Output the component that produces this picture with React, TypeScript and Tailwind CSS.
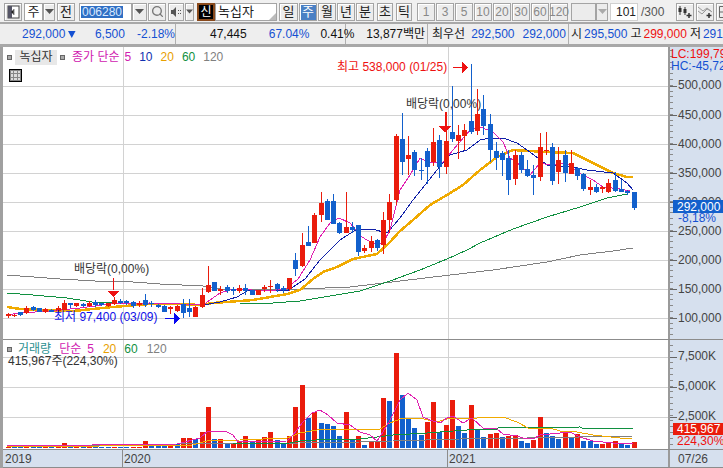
import { Search } from "lucide-react";
import type { ReactNode } from "react";

const RED = "#ea1c0c";
const BLUE = "#1260cc";

// wickTop, bodyTop, bodyBottom, wickBottom, red?  (page pixels)
const candles: [number, number, number, number, number][] = [
  [313, 314, 316, 318, 1], [314, 315, 316, 317, 1], [312, 312, 315, 316, 0], [306, 308, 313, 314, 1], [306, 307, 310, 311, 0],
  [308, 308, 312, 312, 0], [308, 309, 312, 313, 1], [309, 310, 312, 312, 0], [306, 308, 311, 312, 1], [300, 303, 310, 310, 1],
  [303, 303, 305, 308, 0], [303, 303, 306, 307, 1], [303, 304, 306, 307, 0], [301, 303, 306, 307, 1], [300, 302, 305, 307, 0],
  [303, 303, 305, 306, 0], [303, 303, 306, 307, 1], [297, 300, 304, 305, 1], [299, 301, 303, 304, 0], [300, 301, 303, 305, 0],
  [301, 302, 306, 308, 0], [301, 303, 305, 307, 1], [294, 300, 305, 307, 0], [301, 303, 304, 307, 0], [304, 305, 307, 308, 0],
  [305, 306, 312, 312, 0], [306, 307, 309, 314, 1], [305, 306, 311, 312, 1], [299, 304, 313, 318, 0], [299, 308, 312, 317, 0],
  [306, 307, 317, 317, 1], [288, 295, 307, 308, 1], [266, 285, 292, 293, 1], [282, 282, 291, 291, 0], [286, 289, 291, 295, 1],
  [285, 287, 291, 293, 0], [287, 289, 291, 295, 0], [285, 288, 291, 293, 1], [284, 288, 291, 295, 0], [290, 290, 295, 295, 0],
  [290, 290, 295, 295, 1], [285, 287, 289, 292, 1], [280, 286, 287, 293, 1], [283, 284, 289, 292, 0], [286, 288, 290, 293, 0],
  [278, 278, 289, 291, 1], [253, 260, 269, 276, 0], [233, 245, 266, 267, 1], [226, 242, 246, 246, 0], [213, 215, 243, 243, 1],
  [192, 203, 215, 222, 1], [199, 201, 220, 220, 0], [194, 201, 224, 224, 0], [222, 223, 233, 234, 0], [192, 227, 233, 233, 1],
  [222, 227, 230, 233, 0], [225, 225, 252, 256, 0], [245, 248, 251, 253, 1], [236, 241, 248, 252, 1], [239, 240, 248, 251, 0],
  [212, 220, 245, 254, 1], [194, 202, 220, 233, 1], [134, 136, 200, 205, 1], [113, 139, 162, 175, 0], [136, 155, 159, 175, 1],
  [150, 152, 170, 176, 0], [158, 170, 171, 180, 0], [148, 151, 167, 184, 0], [128, 142, 162, 166, 1], [135, 140, 167, 178, 0],
  [112, 141, 167, 174, 1], [86, 132, 139, 142, 0], [125, 135, 141, 159, 1], [124, 130, 136, 150, 1], [64, 121, 132, 134, 0],
  [89, 114, 131, 135, 1], [95, 109, 126, 135, 0], [114, 124, 150, 162, 0], [142, 151, 158, 170, 0], [151, 153, 160, 176, 0],
  [150, 158, 180, 195, 0], [150, 155, 179, 185, 1], [152, 155, 170, 173, 0], [160, 169, 176, 177, 0], [165, 175, 178, 195, 0],
  [133, 147, 177, 181, 1], [132, 150, 151, 155, 1], [143, 147, 181, 185, 0], [147, 160, 172, 184, 1], [150, 155, 173, 182, 0],
  [150, 163, 174, 174, 1], [167, 168, 176, 180, 0], [173, 174, 189, 191, 0], [180, 187, 190, 195, 1], [184, 187, 192, 193, 0],
  [186, 187, 189, 193, 1], [179, 183, 192, 193, 1], [172, 180, 191, 192, 0], [180, 189, 192, 192, 0], [190, 191, 193, 195, 0],
  [192, 192, 208, 210, 0],
];

// volume bar tops (page pixels), red?
const volumes: [number, number][] = [
  [447, 1], [447, 0], [447, 0], [447, 1], [447, 0], [447, 0], [447, 1], [447, 0], [446, 1], [443, 1], [446, 0], [446, 1], [446, 0], [446, 1], [447, 0],
  [447, 0], [447, 0], [447, 1], [447, 0], [447, 0], [447, 1], [447, 1], [441, 1], [445, 0], [445, 0], [446, 0], [446, 1], [444, 0], [438, 1], [438, 1],
  [439, 0], [432, 1], [407, 1], [439, 0], [439, 1], [444, 0], [443, 1], [441, 1], [436, 1], [441, 0], [440, 1], [437, 1], [432, 1], [440, 0], [444, 0],
  [436, 1], [407, 1], [385, 1], [418, 0], [412, 1], [423, 0], [424, 0], [426, 0], [436, 0], [412, 1], [440, 0], [436, 1], [445, 0], [442, 1], [442, 1],
  [398, 1], [401, 0], [353, 1], [395, 0], [418, 0], [428, 0], [435, 0], [422, 1], [402, 1], [432, 0], [425, 1], [400, 1], [426, 0], [433, 0], [405, 1],
  [430, 0], [437, 0], [434, 1], [433, 1], [437, 0], [436, 1], [435, 1], [441, 0], [443, 0], [440, 1], [417, 1], [433, 0], [436, 0], [439, 0], [432, 1],
  [438, 0], [434, 1], [441, 0], [441, 0], [444, 0], [444, 1], [442, 1], [441, 1], [444, 0], [445, 0], [442, 1],
];

const priceLines = [
  { c: "#808080", w: 1, p: "7,275 60,279 113,282 120,281 160,284 203,286 220,289 253,289 300,289 350,287 400,281 450,275 493,270 547,262 580,255 613,251 633,248" },
  { c: "#109040", w: 1, p: "7,293 33,295 67,298 92,302 113,303 180,304 240,304 273,303 300,301 330,296 360,291 390,281 420,270 447,259 467,250 480,243 513,229 547,217 580,207 607,198 627,194" },
  { c: "#f0aa00", w: 2.5, p: "7,307 20,309 47,310 73,311 113,307 150,304 180,304 200,305 213,303 253,300 287,294 300,290 313,279 323,272 337,267 353,259 377,254 390,242 399,232 413,220 430,205 447,195 463,185 480,170 497,157 513,150 547,152 573,153 593,163 613,173 627,177 633,177" },
  { c: "#1020a8", w: 1, p: "203,305 220,302 237,297 247,291 253,290 287,291 305,279 320,260 340,240 357,229 372,229 387,233 400,218 413,200 437,170 450,155 467,150 480,140 490,138 503,138 517,143 530,152 547,165 573,167 587,170 613,173 627,183 633,190" },
  { c: "#e020b0", w: 1, p: "7,315 20,313 50,311 80,308 110,304 150,303 180,304 203,305 220,293 233,289 270,291 287,288 298,279 310,260 320,237 330,223 339,218 350,223 362,237 372,243 383,243 390,230 400,190 410,175 420,158 430,163 443,162 453,150 470,130 480,127 493,132 503,142 510,158 520,165 530,175 540,163 550,165 567,163 577,172 593,180 603,187 620,189 630,191" },
];

const volumeLines = [
  { c: "#808080", w: 1, p: "7,446 140,445 177,444 300,443 360,442 393,441 460,439 527,438 633,436" },
  { c: "#109040", w: 1, p: "233,444 290,443 300,441 333,439 360,439 377,437 393,435 427,433 467,430 497,429 498,428 580,427 582,428 633,428" },
  { c: "#f0aa00", w: 1, p: "7,447 193,445 207,441 240,440 287,438 300,433 317,430 343,429 370,430 380,429 390,423 403,418 420,418 437,422 450,418 477,418 503,417 517,422 530,429 550,428 560,431 577,432 593,435 620,438 632,439" },
  { c: "#e020b0", w: 1, p: "7,446 177,444 200,438 208,431 227,432 233,435 238,442 287,441 293,435 303,422 312,413 320,410 328,415 337,423 350,425 360,432 370,435 377,441 383,432 390,420 400,400 408,393 417,400 423,417 430,420 440,423 447,418 453,416 463,423 472,418 483,428 497,429 503,434 517,436 523,438 533,439 540,435 560,433 570,432 580,437 593,441 613,443 633,443" },
];

const cx = (i: number) => Math.round(7.5 + 6.26 * i);

function Btn({ children, className = "" }: { children?: ReactNode; className?: string }) {
  return (
    <div className={`flex h-[18px] shrink-0 items-center justify-center border border-[#a4a4a4] bg-[#ececec] text-[13px] text-[#222] shadow-[inset_1px_1px_0_#fff] ${className}`}>
      {children}
    </div>
  );
}

function Caret({ color = "#555" }: { color?: string }) {
  return (
    <svg width="9" height="5" viewBox="0 0 9 5">
      <path d="M0 0h9L4.5 5z" fill={color} />
    </svg>
  );
}

function Square() {
  return <div className="h-[5px] w-[5px] shrink-0 border border-[#666] bg-[#aaa]" />;
}

function PriceChart() {
  return (
    <svg width="665" height="292" viewBox="3 47 665 292" shapeRendering="crispEdges" className="block">
      {[86, 115, 144, 173, 202, 231, 260, 289, 318].map((y) => (
        <line key={y} x1="3" x2="668" y1={y} y2={y} stroke="#d2d2d2" />
      ))}
      <line x1="123.5" x2="123.5" y1="47" y2="339" stroke="#d2d2d2" />
      <line x1="448.5" x2="448.5" y1="47" y2="339" stroke="#d2d2d2" />
      {priceLines.map((l) => (
        <polyline key={l.c} points={l.p} fill="none" stroke={l.c} strokeWidth={l.w} />
      ))}
      {candles.map(([wt, bt, bb, wb, red], i) => {
        const c = red ? RED : BLUE;
        return (
          <g key={i} fill={c}>
            <rect x={cx(i)} y={wt} width="1" height={wb - wt} />
            <rect x={cx(i) - 2} y={bt} width="5" height={Math.max(bb - bt, 1)} />
          </g>
        );
      })}
      {/* arrows */}
      <path d="M113 278h1v12h-1z M108 291h11l-5.500 6z" fill="#ee1010" />
      <path d="M445 112h1v14h-1z M439 126h12l-6 7z" fill="#ee1010" />
      <path d="M453 67h9v1h-9z M462 61l6 6.500-6 6.500z" fill="#ee1010" />
      <path d="M165 318h9v1h-9z M174 312l6 6.500-6 6.500z" fill="#0808f0" />
    </svg>
  );
}

function VolumeChart() {
  return (
    <svg width="665" height="109" viewBox="3 340 665 109" shapeRendering="crispEdges" className="block">
      {[357, 387, 417].map((y) => (
        <line key={y} x1="3" x2="668" y1={y} y2={y} stroke="#d2d2d2" />
      ))}
      <line x1="123.5" x2="123.5" y1="340" y2="449" stroke="#d2d2d2" />
      <line x1="448.5" x2="448.5" y1="340" y2="449" stroke="#d2d2d2" />
      {volumes.map(([top, red], i) => (
        <rect key={i} x={cx(i) - 2} y={top} width="5" height={448 - top} fill={red ? RED : BLUE} />
      ))}
      {volumeLines.map((l) => (
        <polyline key={l.c} points={l.p} fill="none" stroke={l.c} strokeWidth={l.w} />
      ))}
    </svg>
  );
}

function Ticks({ height, major }: { height: number; major: number[] }) {
  const minor: number[] = [];
  for (let y = major[0] % 6; y < height; y += 5.8) minor.push(Math.round(y));
  return (
    <svg width="8" height={height} shapeRendering="crispEdges" className="absolute left-0 top-0">
      {minor.map((y) => (
        <line key={y} x1="0" x2="3" y1={y} y2={y} stroke="#8a8a8a" />
      ))}
      {major.map((y) => (
        <line key={y} x1="0" x2="7" y1={y} y2={y} stroke="#666" />
      ))}
    </svg>
  );
}

export default function App() {
  return (
    <div className="h-[468px] w-[723px] overflow-hidden bg-[#f0f0f0] font-['Liberation_Sans','Noto_Sans_CJK_KR',sans-serif] text-[12px] leading-[12px]">
      {/* toolbar */}
      <div className="flex h-[22px] items-center pl-[4px] pt-[1px]">
        <Btn className="w-[18px]">
          <svg width="14" height="14" viewBox="0 0 14 14">
            <rect x="2" y="1" width="11" height="12" fill="#fff" stroke="#444" />
            <rect x="2" y="1" width="4" height="12" fill="#556" />
            <path d="M5 7l3-3v6z" fill="#222" />
            <path d="M8 4v6" stroke="#888" />
          </svg>
        </Btn>
        <div className="ml-[2px] flex shrink-0">
          <Btn className="w-[19px] !bg-white">주</Btn>
          <Btn className="w-[12px]"><Caret /></Btn>
        </div>
        <Btn className="ml-[2px] w-[18px]">전</Btn>
        <div className="ml-[4px] flex h-[18px] w-[53px] shrink-0 items-center border border-[#a4a4a4] bg-white pl-[1px]">
          <span className="bg-[#2f6fc4] px-px text-[12px] text-[#d8e8ff]">006280</span>
        </div>
        <Btn className="w-[15px]"><Caret /></Btn>
        <Btn className="ml-px w-[18px]"><Search size={13} strokeWidth={2.5} color="#777" /></Btn>
        <Btn className="ml-[2px] w-[16px]">
          <svg width="12" height="12" viewBox="0 0 12 12">
            <path d="M1 4h2l3-3v10L3 8H1z" fill="#555" />
            <path d="M8 4h1v1H8zM8 7h1v1H8zM10 4h1v1h-1zM10 7h1v1h-1z" fill="#555" />
          </svg>
        </Btn>
        <Btn className="ml-px w-[9px]"><Caret /></Btn>
        <div className="ml-[3px] flex h-[18px] w-[18px] shrink-0 items-center justify-center border-2 border-[#8a4a1c] bg-black text-[12px] text-white">신</div>
        <div className="relative flex h-[18px] w-[62px] shrink-0 items-center border border-[#a4a4a4] bg-white pl-[2px] text-[13px] text-[#222]">
          녹십자
          <div className="absolute bottom-0 right-0 h-0 w-0 border-b-[7px] border-l-[7px] border-b-[#bbb] border-l-transparent" />
        </div>
        <Btn className="ml-[2px] w-[19px]">일</Btn>
        <Btn className="ml-px w-[18px] !bg-[#4a80c4] !text-white">주</Btn>
        <Btn className="ml-px w-[18px]">월</Btn>
        <Btn className="ml-px w-[18px]">년</Btn>
        <Btn className="ml-px w-[18px]">분</Btn>
        <Btn className="ml-[3px] w-[16px]">초</Btn>
        <Btn className="ml-[3px] w-[16px]">틱</Btn>
        <div className="ml-[5px] flex shrink-0 gap-px text-[#888]">
          {["1", "3", "5", "10", "20", "30", "60", "120"].map((n) => (
            <Btn key={n} className="w-[18px] !text-[12px] !text-[#888]">{n}</Btn>
          ))}
        </div>
        <Btn className="ml-[3px] w-[25px] !shadow-none" />
        <Btn className="w-[12px] !shadow-none"><Caret color="#aaa" /></Btn>
        <div className="ml-[2px] flex h-[18px] w-[28px] shrink-0 items-center justify-end border border-[#d0d0d0] bg-white pr-[1px] text-[#222]">101</div>
        <span className="ml-[3px] w-[26px] shrink-0 text-[#555]">/300</span>
        <Btn className="ml-[9px] w-[18px]">
          <svg width="16" height="14" viewBox="0 0 16 14">
            <path d="M3 1v9M8 2v8" stroke="#333" />
            <rect x="1.500" y="3" width="3" height="4" fill="#333" />
            <rect x="6.500" y="4" width="3" height="4" fill="#333" />
            <path d="M12 8v5M9.500 10.500h5" stroke="#333" strokeWidth="1.500" />
          </svg>
        </Btn>
        <Btn className="ml-[2px] w-[18px]">
          <svg width="16" height="14" viewBox="0 0 16 14">
            <path d="M1 2l5 4 4-3 5 4M1 6l4 3 5-5 4 2" fill="none" stroke="#999" />
            <path d="M12 8v5M9.500 10.500h5" stroke="#333" strokeWidth="1.500" />
          </svg>
        </Btn>
        <Btn className="ml-[2px] w-[18px]">
          <svg width="14" height="14" viewBox="0 0 14 14">
            <path d="M1.500 1.500h11v11h-11zM1.500 7h11M7 1.500V7" fill="none" stroke="#666" />
          </svg>
        </Btn>
      </div>
      <div className="h-[2px] bg-[#a8a8a8]" />

      {/* quote row */}
      <div className="flex h-[20px] items-center overflow-hidden whitespace-nowrap bg-[#eeeeee] text-[12px]">
        <div className="flex h-full w-[176px] shrink-0 items-center border-r border-[#b0b0b0] text-[#1450d2]">
          <span className="ml-[22px]">292,000</span>
          <svg width="10" height="9" viewBox="0 0 10 9" className="ml-[3px]"><path d="M0 0h10L5 9z" fill="#1450d2" /></svg>
          <span className="ml-[19px]">6,500</span>
          <span className="ml-[12px]">-2.18%</span>
        </div>
        <div className="flex h-full w-[170px] shrink-0 items-center border-r border-[#b0b0b0]">
          <span className="ml-[34px] text-[#111]">47,445</span>
          <span className="ml-[22px] text-[#1450d2]">67.04%</span>
          <span className="ml-[11px] text-[#111]">0.41%</span>
        </div>
        <div className="flex h-full w-[82px] shrink-0 items-center justify-end border-r border-[#b0b0b0] pr-[2px] text-[#111]">13,877백만</div>
        <div className="flex h-full w-[141px] shrink-0 items-center border-r border-[#b0b0b0] text-[#1450d2]">
          <span className="ml-[4px] text-[#222]">최우선</span>
          <span className="ml-[6px]">292,500</span>
          <span className="ml-[8px]">292,000</span>
        </div>
        <span className="ml-[2px] text-[#222]">시</span>
        <span className="ml-[2px] text-[#1450d2]">295,500</span>
        <span className="ml-[3px] text-[#222]">고</span>
        <span className="ml-[2px] text-[#ee1010]">299,000</span>
        <span className="ml-[3px] text-[#222]">저</span>
        <span className="ml-[2px] text-[#1450d2]">291,500</span>
      </div>
      <div className="h-[3px] bg-[#a8a8a8]" />

      <div className="flex flex-col border-l-[3px] border-[#a0a0a0]">
        {/* price panel */}
        <div className="flex h-[292px]">
          <div className="relative w-[665px] bg-white">
            <PriceChart />
            <div className="absolute left-[4px] top-[3px] flex h-[14px] items-center">
              <Square />
              <div className="ml-[3px] flex h-[15px] w-[42px] items-center justify-center bg-[#e8e8e8] text-[12px] text-[#333]">녹십자</div>
              <div className="ml-[3px]"><Square /></div>
              <span className="ml-[7px] text-[#d020b0]">종가 단순</span>
              <span className="ml-[5px] text-[#d020b0]">5</span>
              <span className="ml-[8px] text-[#1030b0]">10</span>
              <span className="ml-[8px] text-[#e8a000]">20</span>
              <span className="ml-[8px] text-[#109040]">60</span>
              <span className="ml-[8px] text-[#808080]">120</span>
            </div>
            <div className="absolute left-[6px] top-[22px] grid h-[13px] w-[13px] grid-cols-3 grid-rows-3 gap-px border border-black bg-[#888] p-px">
              {[0, 1, 2, 3, 4, 5, 6, 7, 8].map((n) => (
                <div key={n} className="bg-[#ddd]" />
              ))}
            </div>
            <div className="absolute left-[334px] top-[14px] whitespace-nowrap text-[#ee1010]">최고 538,000 (01/25)</div>
            <div className="absolute left-[403px] top-[51px] whitespace-nowrap text-[#333]">배당락(0,00%)</div>
            <div className="absolute left-[71px] top-[216px] whitespace-nowrap text-[#333]">배당락(0,00%)</div>
            <div className="absolute left-[51px] top-[264px] whitespace-nowrap text-[#1010e8]">최저 97,400 (03/09)</div>
          </div>
          <div className="relative flex-1 border-l-2 border-[#9a9a9a] bg-[#d6e0ee] text-[#444]">
            <Ticks height={292} major={[39, 68, 97, 126, 155, 184, 213, 242, 271]} />
            <div className="absolute left-px top-[1px] whitespace-nowrap text-[#ee1010]">LC:199,79</div>
            <div className="absolute left-px top-[13px] whitespace-nowrap text-[#1450d2]">HC:-45,72</div>
            {[
              ["500,000", "top-[32px]"],
              ["450,000", "top-[62px]"],
              ["400,000", "top-[91px]"],
              ["350,000", "top-[120px]"],
              ["300,000", "top-[149px]"],
              ["250,000", "top-[178px]"],
              ["200,000", "top-[207px]"],
              ["150,000", "top-[236px]"],
              ["100,000", "top-[265px]"],
            ].map(([label, top]) => (
              <div key={label} className={`absolute left-[8px] ${top}`}>{label}</div>
            ))}
            <div className="absolute left-[3px] top-[153px] flex h-[13px] w-[50px] items-center bg-[#1260cc] pl-[4px] text-white">292,000</div>
            <div className="absolute left-[8px] top-[165px] text-[#1450d2]">-8,18%</div>
          </div>
        </div>
        <div className="h-px bg-[#8c8c8c]" />

        {/* volume panel */}
        <div className="flex h-[109px]">
          <div className="relative w-[665px] bg-white">
            <VolumeChart />
            <div className="absolute left-[4px] top-[2px] flex h-[14px] items-center">
              <Square />
              <span className="ml-[6px] text-[#2a9090]">거래량</span>
              <span className="ml-[8px] text-[#d020b0]">단순</span>
              <span className="ml-[6px] text-[#d020b0]">5</span>
              <span className="ml-[9px] text-[#e8a000]">20</span>
              <span className="ml-[8px] text-[#109040]">60</span>
              <span className="ml-[9px] text-[#808080]">120</span>
            </div>
            <div className="absolute left-[5px] top-[15px] whitespace-nowrap text-[#333]">415,967주(224,30%)</div>
          </div>
          <div className="relative flex-1 border-l-2 border-[#9a9a9a] bg-[#d6e0ee] text-[#444]">
            <Ticks height={109} major={[17, 47, 77]} />
            <div className="absolute left-[8px] top-[10px]">7,500K</div>
            <div className="absolute left-[8px] top-[40px]">5,000K</div>
            <div className="absolute left-[8px] top-[70px]">2,500K</div>
            <div className="absolute left-[3px] top-[83px] flex h-[12px] w-[50px] items-center bg-[#ea1c0c] pl-[4px] text-white">415,967</div>
            <div className="absolute left-[7px] top-[95px] text-[#ee1010]">224,30%</div>
          </div>
        </div>

        {/* dates */}
        <div className="flex h-[19px] border-y border-[#8c8c8c] bg-[#d6e0ee] text-[#444]">
          <div className="flex w-[120px] items-center border-r border-[#8c8c8c] pl-[2px]">2019</div>
          <div className="flex w-[325px] items-center border-r border-[#8c8c8c] pl-[1px]">2020</div>
          <div className="flex w-[220px] items-center pl-[1px]">2021</div>
          <div className="flex flex-1 items-center border-l-2 border-[#9a9a9a] pl-[8px]">07/26</div>
        </div>
      </div>
    </div>
  );
}
